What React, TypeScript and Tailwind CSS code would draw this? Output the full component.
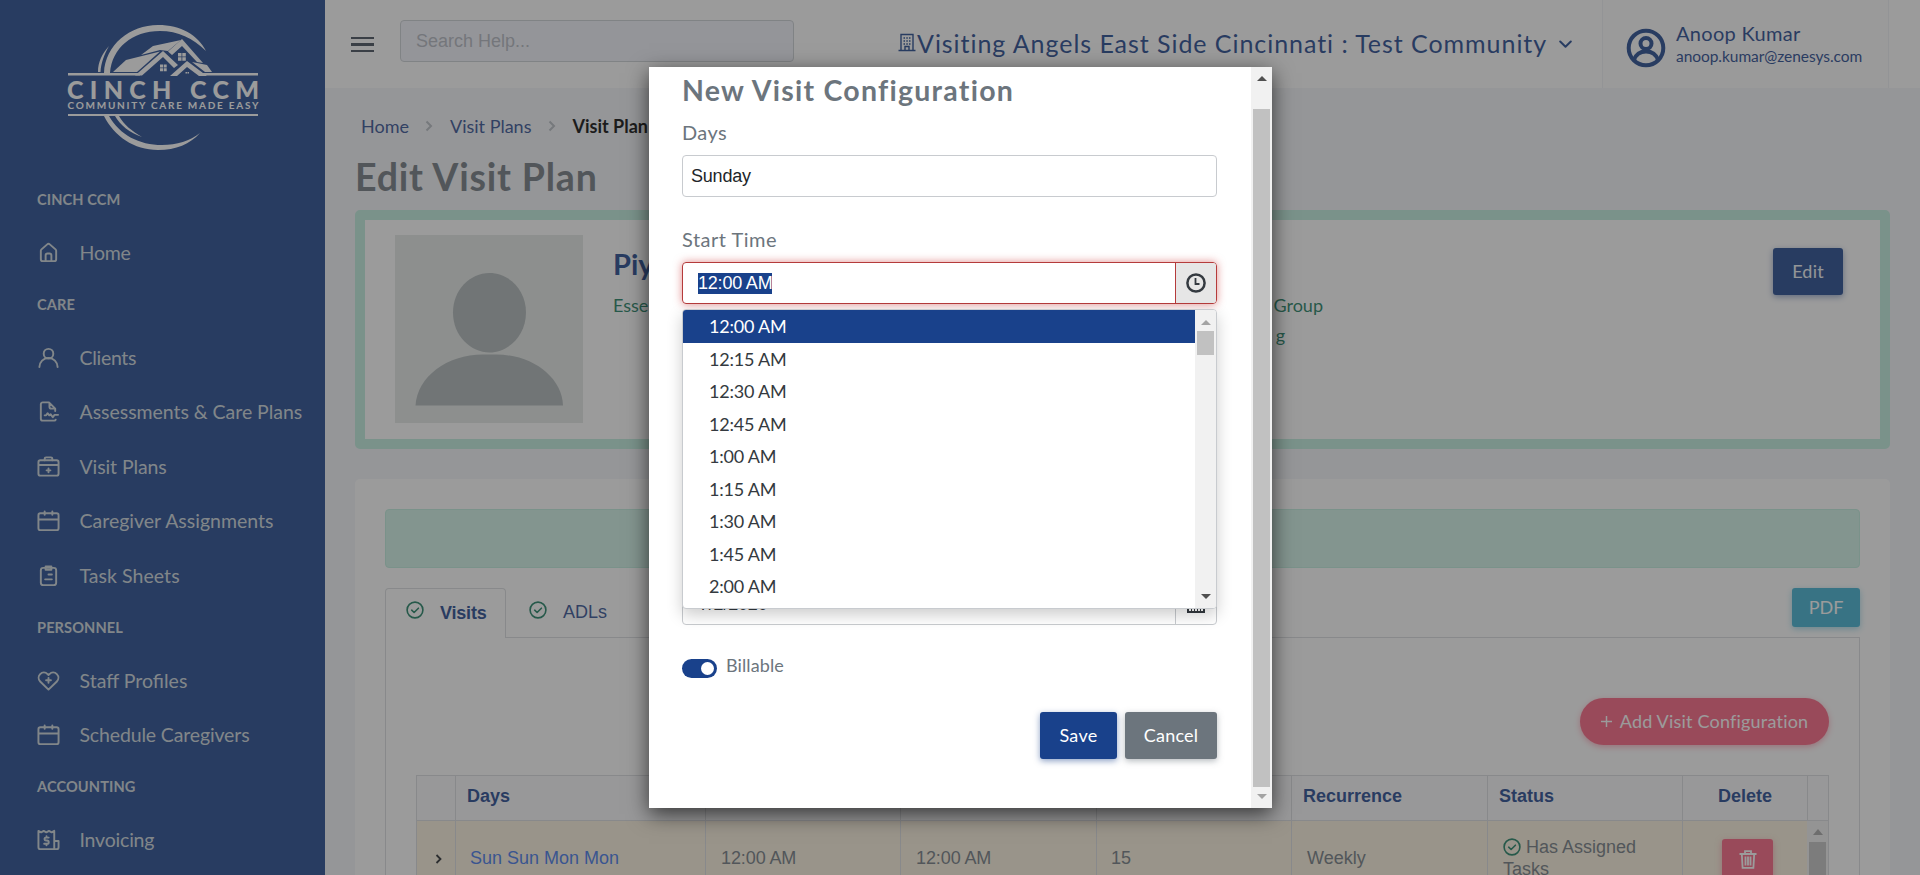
import React from "react";

type IconName = "home" | "user" | "contract" | "medkit" | "calendar" | "clipboard" | "heart" | "invoice";

function NavIcon({ name }: { name: IconName }) {
  const common = {
    width: 23,
    height: 23,
    viewBox: "0 0 24 24",
    fill: "none",
    stroke: "currentColor",
    strokeWidth: 2,
    strokeLinecap: "round" as const,
    strokeLinejoin: "round" as const,
  };
  switch (name) {
    case "home":
      return (
        <svg {...common} stroke="none" fill="currentColor">
          <path d="M20,8h0L14,2.74a3,3,0,0,0-4,0L4,8a3,3,0,0,0-1,2.26V19a3,3,0,0,0,3,3H18a3,3,0,0,0,3-3V10.25A3,3,0,0,0,20,8ZM14,20H10V15a1,1,0,0,1,1-1h2a1,1,0,0,1,1,1Zm5-1a1,1,0,0,1-1,1H16V15a3,3,0,0,0-3-3H11a3,3,0,0,0-3,3v5H6a1,1,0,0,1-1-1V10.25a1,1,0,0,1,.34-.75l6-5.25a1,1,0,0,1,1.32,0l6,5.25a1,1,0,0,1,.34.75Z" />
        </svg>
      );
    case "user":
      return (
        <svg {...common}>
          <circle cx="12" cy="8" r="5" />
          <path d="M2.500 22a9.500 9.500 0 0 1 19 0" />
        </svg>
      );
    case "contract":
      return (
        <svg {...common}>
          <path d="M18.500 21.500H6a2 2 0 0 1-2-2V4.500a2 2 0 0 1 2-2h6.500L19 9v2.500M13 3v4a2 2 0 0 0 2 2h4M19.500 20.500a1.500 1.500 0 0 1-1.500 1M8 16h1.500l1.500-2.200 1.800 2.200 1.500-1 2.200 3 1.800-2.500H22" />
        </svg>
      );
    case "medkit":
      return (
        <svg {...common}>
          <rect x="1.500" y="5.500" width="21" height="16" rx="2" />
          <path d="M8 5.500V4A1.500 1.500 0 0 1 9.500 2.500h5A1.500 1.500 0 0 1 16 4v1.500M2 10.500h20M12 14v4M10 16h4" />
        </svg>
      );
    case "calendar":
      return (
        <svg {...common}>
          <rect x="1.500" y="4.500" width="21" height="17.500" rx="2" />
          <path d="M2 11h20M8 2.500v3.500M16 2.500v3.500" />
        </svg>
      );
    case "clipboard":
      return (
        <svg {...common}>
          <rect x="4" y="4" width="16" height="18" rx="2.500" />
          <path d="M9 2.500h6v3.500H9zM12 11h3.500M8.500 16h7" />
        </svg>
      );
    case "heart":
      return (
        <svg {...common}>
          <path d="M12 21.500l-8.700-8.500a5.500 5.500 0 0 1 0-7.700 5.500 5.500 0 0 1 7.700 0l1 .9 1-.9a5.500 5.500 0 0 1 7.700 0 5.500 5.500 0 0 1 0 7.700zM12 9.300v5M9.500 11.800h5" />
        </svg>
      );
    case "invoice":
      return (
        <svg {...common}>
          <path d="M18 22H3.500a2 2 0 0 1-2-2V3L4.300 4.500 7 3l2.700 1.500L12.500 3l2.800 1.500L18 3zM18 13.500h4.500V20a2 2 0 0 1-2 2H18M12.200 10H9.300a1.500 1.500 0 0 0 0 3h1.200a1.500 1.500 0 0 1 0 3.500H7.500M9.900 8.500V10M9.900 16.500V18" />
        </svg>
      );
  }
}

function CheckCircle() {
  return (
    <svg width="18" height="18" viewBox="0 0 18 18" fill="none" stroke="#147a5c" strokeWidth="1.600" strokeLinecap="round" strokeLinejoin="round">
      <circle cx="9" cy="9" r="7.900" />
      <path d="M5.700 9.200l2.400 2.300 4.300-4.300" />
    </svg>
  );
}

function Crumb({ children }: { children: React.ReactNode }) {
  return <span className="text-[18px] text-[#2b4a8f]">{children}</span>;
}

function CrumbArrow() {
  return (
    <svg width="8" height="12" viewBox="0 0 8 12" fill="none" stroke="#b4bac0" strokeWidth="2">
      <path d="M1.500 1.500L6 6l-4.500 4.500" />
    </svg>
  );
}

function Logo() {
  return (
    <svg width="194" height="130" viewBox="66 22 194 130" fill="#ffffff" fontFamily="Lato, sans-serif">
      <path d="M104 73C105 45 130 25 158 25C181 25 198 35 206 51C193 38 178 31 160 31C132 31 112 48 110 73Z" />
      <path d="M98 72C98 62 102 54 109 46C104 55 101 63 100.500 72Z" />
      <path d="M104 116C114 136 134 150 158 150C176 150 190 144 200 133C190 141 177 145 162 145C139 145 120 135 109 116Z" />
      <path d="M115 116C120 125 130 133 142 137C132 131 124 125 119 116Z" />
      <path d="M113 72L126 60L160 51.500L137 72Z" />
      <path d="M141 55L153 46L181 40L168 51L160 50Z" />
      <path d="M135 75.500L163 51L178 65L174 68L163 57L142 75.500Z" />
      <path d="M168 51.500L182 39L203 63L197 62L182 46L172 55Z" />
      <path d="M170 76L187 61L207 76H199L187 67L177 76Z" />
      <path d="M192 62L207 65L212 72H205Z" />
      <path d="M178 53h3.500v3.500h-3.500zM182.300 53h3.500v3.500h-3.500zM178 57.200h3.500v3.500h-3.500zM182.300 57.200h3.500v3.500h-3.500z" />
      <path d="M160 64.500h3v3h-3zM163.700 64.500h3v3h-3zM160 68.200h3v3h-3zM163.700 68.200h3v3h-3z" />
      <path d="M185.500 72h1.500v1.500h-1.500zM187.500 72h1.500v1.500h-1.500z" />
      <rect x="68" y="73" width="72" height="2.500" />
      <rect x="200" y="73" width="58" height="2.500" />
      <rect x="68" y="114" width="190" height="2" />
      <text x="67" y="98.500" fontSize="25" fontWeight="900" textLength="192">CINCH CCM</text>
      <text x="67.500" y="109" fontSize="10" fontWeight="700" textLength="191">COMMUNITY CARE MADE EASY</text>
    </svg>
  );
}

const nav: { heading: string; items: { icon: IconName; label: string; track: string }[] }[] = [
  { heading: "CINCH CCM", items: [{ icon: "home", label: "Home", track: "tracking-[-0.2px]" }] },
  {
    heading: "CARE",
    items: [
      { icon: "user", label: "Clients", track: "tracking-[-0.3px]" },
      { icon: "contract", label: "Assessments & Care Plans", track: "tracking-[-0.04px]" },
      { icon: "medkit", label: "Visit Plans", track: "tracking-[-0.1px]" },
      { icon: "calendar", label: "Caregiver Assignments", track: "tracking-[0px]" },
      { icon: "clipboard", label: "Task Sheets", track: "tracking-[0.05px]" },
    ],
  },
  {
    heading: "PERSONNEL",
    items: [
      { icon: "heart", label: "Staff Profiles", track: "tracking-[0px]" },
      { icon: "calendar", label: "Schedule Caregivers", track: "tracking-[-0.15px]" },
    ],
  },
  { heading: "ACCOUNTING", items: [{ icon: "invoice", label: "Invoicing", track: "tracking-[-0.2px]" }] },
];

function Sidebar() {
  return (
    <aside className="flex h-full w-[325px] shrink-0 flex-col bg-[#19418b] text-[#cbd5db]">
      <div className="h-[174.500px] shrink-0 pl-[66px] pt-[22px]">
        <Logo />
      </div>
      {nav.map((group) => (
        <div key={group.heading} className="shrink-0">
          <div className="flex h-[50.500px] items-center pl-[37px] text-[14.600px] font-bold tracking-[0.1px]">{group.heading}</div>
          {group.items.map((item) => (
            <div key={item.label} className="flex h-[54.500px] items-center pl-[37px]">
              <NavIcon name={item.icon} />
              <span className={`ml-[19.500px] whitespace-nowrap text-[19.500px] ${item.track}`}>{item.label}</span>
            </div>
          ))}
        </div>
      ))}
    </aside>
  );
}

function Header() {
  return (
    <header className="flex h-[88px] shrink-0 bg-white text-[#19418b]">
      <div className="flex w-[75px] flex-col gap-[4px] pl-[26px] pt-[37px]">
        <i className="block h-[2.400px] w-[23px] bg-[#3c4655]" />
        <i className="block h-[2.400px] w-[23px] bg-[#3c4655]" />
        <i className="block h-[2.400px] w-[23px] bg-[#3c4655]" />
      </div>
      <div className="mt-5 flex h-[42px] w-[394px] items-center rounded-[4px] border border-[#c9ced3] bg-[#f1f3fa] pl-[15px] font-['Liberation_Sans',sans-serif] text-[18px] text-[#b0b5bf]">
        Search Help...
      </div>
      <div className="ml-[104px] flex h-full w-[704px] items-center">
        <svg className="mb-[3px]" width="18" height="19" viewBox="0 0 18 19" fill="none" stroke="currentColor" strokeWidth="1.400">
          <path d="M3 17.500V1.500h12v16M.5 17.500h17M7 17.500v-4h4v4" />
          <path d="M5.500 5H7M8.300 5h1.500M11 5h1.500M5.500 8H7M8.300 8h1.500M11 8h1.500M5.500 11H7M8.300 11h1.500M11 11h1.500" strokeWidth="1.500" />
        </svg>
        <span className="ml-[1px] whitespace-nowrap text-[25px] tracking-[0.95px]">Visiting Angels East Side Cincinnati : Test Community</span>
        <svg className="ml-[12px]" width="13" height="9" viewBox="0 0 13 9" fill="none" stroke="currentColor" strokeWidth="2" strokeLinecap="round" strokeLinejoin="round">
          <path d="M1.200 1.500l5.300 5.300 5.300-5.300" />
        </svg>
      </div>
      <div className="flex h-full w-[287px] border-x border-[#eef1f5] bg-[#fcfcfd] pl-[23px]">
        <svg className="mt-[28px]" width="40" height="40" viewBox="0 0 40 40" fill="none" stroke="currentColor" strokeWidth="4">
          <circle cx="20" cy="20" r="17.300" />
          <circle cx="20" cy="15.500" r="5.500" />
          <path d="M8 32c2-6 6-8.500 12-8.500s10 2.500 12 8.500" />
        </svg>
        <div className="ml-[10px] flex flex-col pt-[20px]">
          <span className="text-[20px] leading-[26px] tracking-[0.3px]">Anoop Kumar</span>
          <span className="text-[15.500px] leading-[21px] tracking-[-0.05px]">anoop.kumar@zenesys.com</span>
        </div>
      </div>
    </header>
  );
}

function ClientCard() {
  return (
    <section className="flex h-[239px] shrink-0 rounded-[5px] border-[10px] border-[#bcecdc] bg-white">
      <svg className="ml-[30px] mt-[15px]" width="188" height="188" viewBox="0 0 188 188">
        <rect width="188" height="188" fill="#e2e6e4" />
        <path d="M94.500 38C114 38 131 55 131 77.500C131 101 113 117.500 94.500 117.500C76 117.500 58 101 58 77.500C58 55 75 38 94.500 38Z" fill="#aab2b4" />
        <path d="M20.500 170.500C22 142 52 119.500 88 119.500H101C137 119.500 167 142 168 170.500Z" fill="#aab2b4" />
      </svg>
      <div className="ml-[30px] flex w-[650px] flex-col pt-[24px]">
        <span className="text-[29px] font-bold leading-[40px] text-[#19418b]">Piy</span>
        <span className="mt-[6px] text-[18px] leading-[30px] text-[#147a5c]">Esse</span>
      </div>
      <div className="flex w-[60px] flex-col items-end pt-[70px] text-[18px] leading-[30px] text-[#147a5c]">
        <span>Group</span>
        <span className="mr-[38px]">g</span>
      </div>
      <div className="ml-auto mr-[37px] mt-[28px] flex h-[47px] w-[70px] items-center justify-center rounded-[3px] bg-[#19418b] text-[18px] tracking-[0.2px] text-[#eef2f7] shadow-[0_2px_6px_rgba(25,65,139,0.5)]">
        Edit
      </div>
    </section>
  );
}

const gridCols = "grid grid-cols-[39px_250px_195px_196px_195px_196px_195px_125px_21px]";

function VisitTable() {
  return (
    <div className="ml-[30px] mt-[30px] w-[1413px] border-r border-t border-[#d8dbde] font-['Liberation_Sans',sans-serif] text-[18px] text-[#6c757d]">
      <div className={`${gridCols} h-[45px] border-b border-[#d8dbde] bg-[#f9f9fb] font-bold text-[#19418b]`}>
        <div className="border-l border-[#d8dbde]" />
        <div className="flex items-center border-l border-[#d8dbde] pb-1 pl-[11px]">Days</div>
        <div className="border-l border-[#d8dbde]" />
        <div className="border-l border-[#d8dbde]" />
        <div className="border-l border-[#d8dbde]" />
        <div className="flex items-center border-l border-[#d8dbde] pb-1 pl-[11px]">Recurrence</div>
        <div className="flex items-center border-l border-[#d8dbde] pb-1 pl-[11px]">Status</div>
        <div className="flex items-center justify-center border-l border-[#d8dbde] pb-1">Delete</div>
        <div className="border-l border-[#d8dbde]" />
      </div>
      <div className={`${gridCols} h-[75px] bg-[#faf0dc]`}>
        <div className="flex items-center justify-center border-l border-[#d8dbde] pl-1">
          <svg width="7" height="10" viewBox="0 0 7 10" fill="none" stroke="#212529" strokeWidth="1.800">
            <path d="M1.500 1l4 4-4 4" />
          </svg>
        </div>
        <div className="flex items-center border-l border-[#d8dbde] pl-[14px] text-[#3b73e8]">Sun Sun Mon Mon</div>
        <div className="flex items-center border-l border-[#d8dbde] pl-[15px] tracking-[-0.1px]">12:00 AM</div>
        <div className="flex items-center border-l border-[#d8dbde] pl-[15px] tracking-[-0.1px]">12:00 AM</div>
        <div className="flex items-center border-l border-[#d8dbde] pl-[14px]">15</div>
        <div className="flex items-center border-l border-[#d8dbde] pl-[15px]">Weekly</div>
        <div className="border-l border-[#d8dbde] pl-[15px] pt-[15px] leading-[22px]">
          <div className="flex items-center gap-[5px]">
            <CheckCircle />
            Has Assigned
          </div>
          <div>Tasks</div>
        </div>
        <div className="flex items-start border-l border-[#d8dbde] pl-[39px] pt-[18px]">
          <div className="flex h-[42px] w-[51px] justify-center rounded-[3px] bg-[#fa5c7c] pt-[11px] shadow-[0_2px_6px_rgba(250,92,124,0.5)]">
            <svg width="18" height="19" viewBox="0 0 18 19" fill="none" stroke="#ffffff" strokeWidth="1.800">
              <path d="M.5 4h17M6 3.500V1.200h6v2.300M2.800 4l.8 13.800h10.800L15.200 4M6.500 6.500v9M9 6.500v9M11.500 6.500v9" />
            </svg>
          </div>
        </div>
        <div className="flex flex-col items-center bg-[#f1f1f1] pt-[8px]">
          <svg width="10" height="6" viewBox="0 0 10 6" fill="#a3a3a3">
            <path d="M0 6L5 0l5 6z" />
          </svg>
          <div className="mt-[7px] w-[17px] grow bg-[#c1c1c1]" />
        </div>
      </div>
    </div>
  );
}

function VisitsCard() {
  return (
    <section className="mt-[30px] flex h-[420px] shrink-0 flex-col rounded-[5px] bg-white px-[30px] pt-[30px]">
      <div className="h-[59px] shrink-0 rounded-[4px] border border-[#bcecdc] bg-[#cef2e7]" />
      <div className="mt-5 flex h-[50px] shrink-0 font-['Liberation_Sans',sans-serif] text-[18px] text-[#19418b]">
        <div className="flex w-[121px] items-center rounded-t-[4px] border border-b-0 border-[#d8dbde] pl-[20px]">
          <span className="mb-[7px]">
            <CheckCircle />
          </span>
          <span className="ml-[16px] font-bold tracking-[-0.2px]">Visits</span>
        </div>
        <div className="flex grow items-center border-b border-[#d8dbde] pl-[23px]">
          <span className="mb-[6px]">
            <CheckCircle />
          </span>
          <span className="ml-[16px] text-[#2b4a8f]">ADLs</span>
          <div className="mb-[11px] ml-auto flex h-[39px] w-[68px] items-center justify-center rounded-[3px] bg-[#39afd1] font-[Lato,sans-serif] text-[18px] text-white shadow-[0_2px_6px_rgba(57,175,209,0.5)]">
            PDF
          </div>
        </div>
      </div>
      <div className="grow border-x border-[#d8dbde]">
        <div className="flex justify-end pr-[30px] pt-[60px]">
          <div className="flex h-[47px] w-[249px] items-center justify-center gap-[8px] rounded-full bg-[#fa5c7c] text-[18px] text-white shadow-[0_2px_6px_rgba(250,92,124,0.5)]">
            <svg width="11" height="11" viewBox="0 0 12 12" stroke="currentColor" strokeWidth="1.600">
              <path d="M6 0v12M0 6h12" />
            </svg>
            <span className="whitespace-nowrap tracking-[0.2px]">Add Visit Configuration</span>
          </div>
        </div>
        <VisitTable />
      </div>
    </section>
  );
}

const times = ["12:00 AM", "12:15 AM", "12:30 AM", "12:45 AM", "1:00 AM", "1:15 AM", "1:30 AM", "1:45 AM", "2:00 AM"];

function TimeList() {
  return (
    <div className="absolute left-0 top-[47px] flex h-[300px] w-[535px] overflow-hidden rounded-[4px] border border-[#c8cbcf] bg-white tracking-[-0.2px] shadow-[0_6px_16px_rgba(0,0,0,0.2)]">
      <div className="w-[512px]">
        {times.map((t, i) => (
          <div
            key={t}
            className={
              i === 0
                ? "flex h-[33px] items-center bg-[#19418b] pl-[26px] text-[18px] text-white"
                : "flex h-[32.500px] items-center pl-[26px] text-[18px] text-[#343a40]"
            }
          >
            {t}
          </div>
        ))}
      </div>
      <div className="flex w-[21px] flex-col items-center bg-[#f1f1f1] pt-[10px]">
        <svg width="10" height="5" viewBox="0 0 10 5" fill="#a3a3a3">
          <path d="M0 5L5 0l5 5z" />
        </svg>
        <div className="mt-[6px] h-[24px] w-[17px] bg-[#c1c1c1]" />
        <svg className="mb-[9px] mt-auto" width="10" height="5" viewBox="0 0 10 5" fill="#505050">
          <path d="M0 0l5 5 5-5z" />
        </svg>
      </div>
    </div>
  );
}

function Modal() {
  return (
    <div className="absolute left-[649px] top-[67px] flex h-[741px] w-[623px] bg-white text-[#6c757d] shadow-[0_6px_20px_rgba(0,0,0,0.65)]">
      <div className="w-[602px] pl-[33px] pr-[34px]">
        <h2 className="whitespace-nowrap pt-[3px] text-[28.500px] font-bold leading-[40px] tracking-[1.25px]">New Visit Configuration</h2>
        <div className="mt-[9px] text-[20px] leading-[26px] tracking-[0.4px]">Days</div>
        <div className="mt-[10px] flex h-[42px] items-center rounded-[4px] border border-[#c8cbcf] pl-[8px] font-['Liberation_Sans',sans-serif] text-[18px] tracking-[-0.2px] text-[#212529]">
          Sunday
        </div>
        <div className="mt-[29px] text-[20px] leading-[26px] tracking-[0.5px]">Start Time</div>
        <div className="relative mt-[10px] flex h-[42px]">
          <div className="flex w-full overflow-hidden rounded-[4px] border border-[#b53b3b] shadow-[0_0_8px_rgba(200,50,50,0.55)]">
            <div className="flex grow items-center pl-[15px] font-['Liberation_Sans',sans-serif] text-[18px] tracking-[-0.2px]">
              <span className="bg-[#19418b] leading-[21px] text-white">12:00 AM</span>
            </div>
            <div className="flex w-[41px] items-center justify-center border-l border-[#b53b3b] bg-[#e6e6e6]">
              <svg width="20" height="20" viewBox="0 0 20 20" fill="none" stroke="#343a40" strokeWidth="2.500">
                <circle cx="10" cy="10" r="8.600" />
                <path d="M9.500 5v6h4" strokeWidth="1.800" />
              </svg>
            </div>
          </div>
          <TimeList />
        </div>
        <div className="mt-[279px] flex h-[42px] rounded-[4px] border border-[#c8cbcf]">
          <div className="flex grow items-center pl-[16px] font-['Liberation_Sans',sans-serif] text-[18px] tracking-[-0.2px] text-[#343a40]">7/2/2020</div>
          <div className="flex w-[41px] items-center justify-center border-l border-[#c8cbcf]">
            <svg width="18" height="18" viewBox="0 0 18 18" fill="#343a40">
              <path d="M0 2h18v16H0zM2 13v3h2v-3zM5 13v3h2v-3zM8 13v3h2v-3zM11 13v3h2v-3zM14 13v3h2v-3z" fillRule="evenodd" />
            </svg>
          </div>
        </div>
        <div className="mt-[28px] flex h-[26px] items-center">
          <div className="mt-[5px] flex h-[19px] w-[35px] items-center justify-end rounded-full bg-[#19418b] pr-[3px]">
            <div className="h-[13px] w-[13px] rounded-full bg-white" />
          </div>
          <span className="mb-[2px] ml-[9px] text-[18px] leading-[26px] tracking-[0.1px]">Billable</span>
        </div>
        <div className="mt-[33px] flex justify-end gap-[8px] text-[18px] text-white">
          <div className="flex h-[47px] w-[77px] items-center justify-center rounded-[3px] bg-[#19418b] tracking-[0.3px] shadow-[0_2px_6px_rgba(25,65,139,0.5)]">Save</div>
          <div className="flex h-[47px] w-[92px] items-center justify-center rounded-[3px] bg-[#6c757d] tracking-[0.2px] shadow-[0_2px_6px_rgba(108,117,125,0.5)]">Cancel</div>
        </div>
      </div>
      <div className="flex w-[21px] flex-col items-center bg-[#f1f1f1] pt-[9px]">
        <svg width="10" height="5" viewBox="0 0 10 5" fill="#505050">
          <path d="M0 5L5 0l5 5z" />
        </svg>
        <div className="mt-[28px] h-[678px] w-[17px] bg-[#c1c1c1]" />
        <svg className="mt-[7px]" width="10" height="5" viewBox="0 0 10 5" fill="#a3a3a3">
          <path d="M0 0l5 5 5-5z" />
        </svg>
      </div>
    </div>
  );
}

export default function App() {
  return (
    <div className="relative flex h-[875px] w-[1920px] overflow-hidden bg-[#f3f4f9] font-[Lato,sans-serif]">
      <Sidebar />
      <div className="flex w-[1595px] flex-col">
        <Header />
        <main className="flex flex-col px-[30px] pt-[23px]">
          <nav className="flex h-[30px] shrink-0 items-center pl-[6px]">
            <Crumb>Home</Crumb>
            <span className="mx-[16.500px]">
              <CrumbArrow />
            </span>
            <Crumb>Visit Plans</Crumb>
            <span className="mx-[16.500px]">
              <CrumbArrow />
            </span>
            <span className="text-[18px] font-bold text-black">Visit Plan</span>
          </nav>
          <h1 className="h-[69px] shrink-0 text-[37.500px] font-bold leading-[71px] tracking-[0.8px] text-[#6c757d]">Edit Visit Plan</h1>
          <ClientCard />
          <VisitsCard />
        </main>
      </div>
      <div className="absolute inset-0 bg-[rgba(56,56,56,0.5)]" />
      <Modal />
    </div>
  );
}
